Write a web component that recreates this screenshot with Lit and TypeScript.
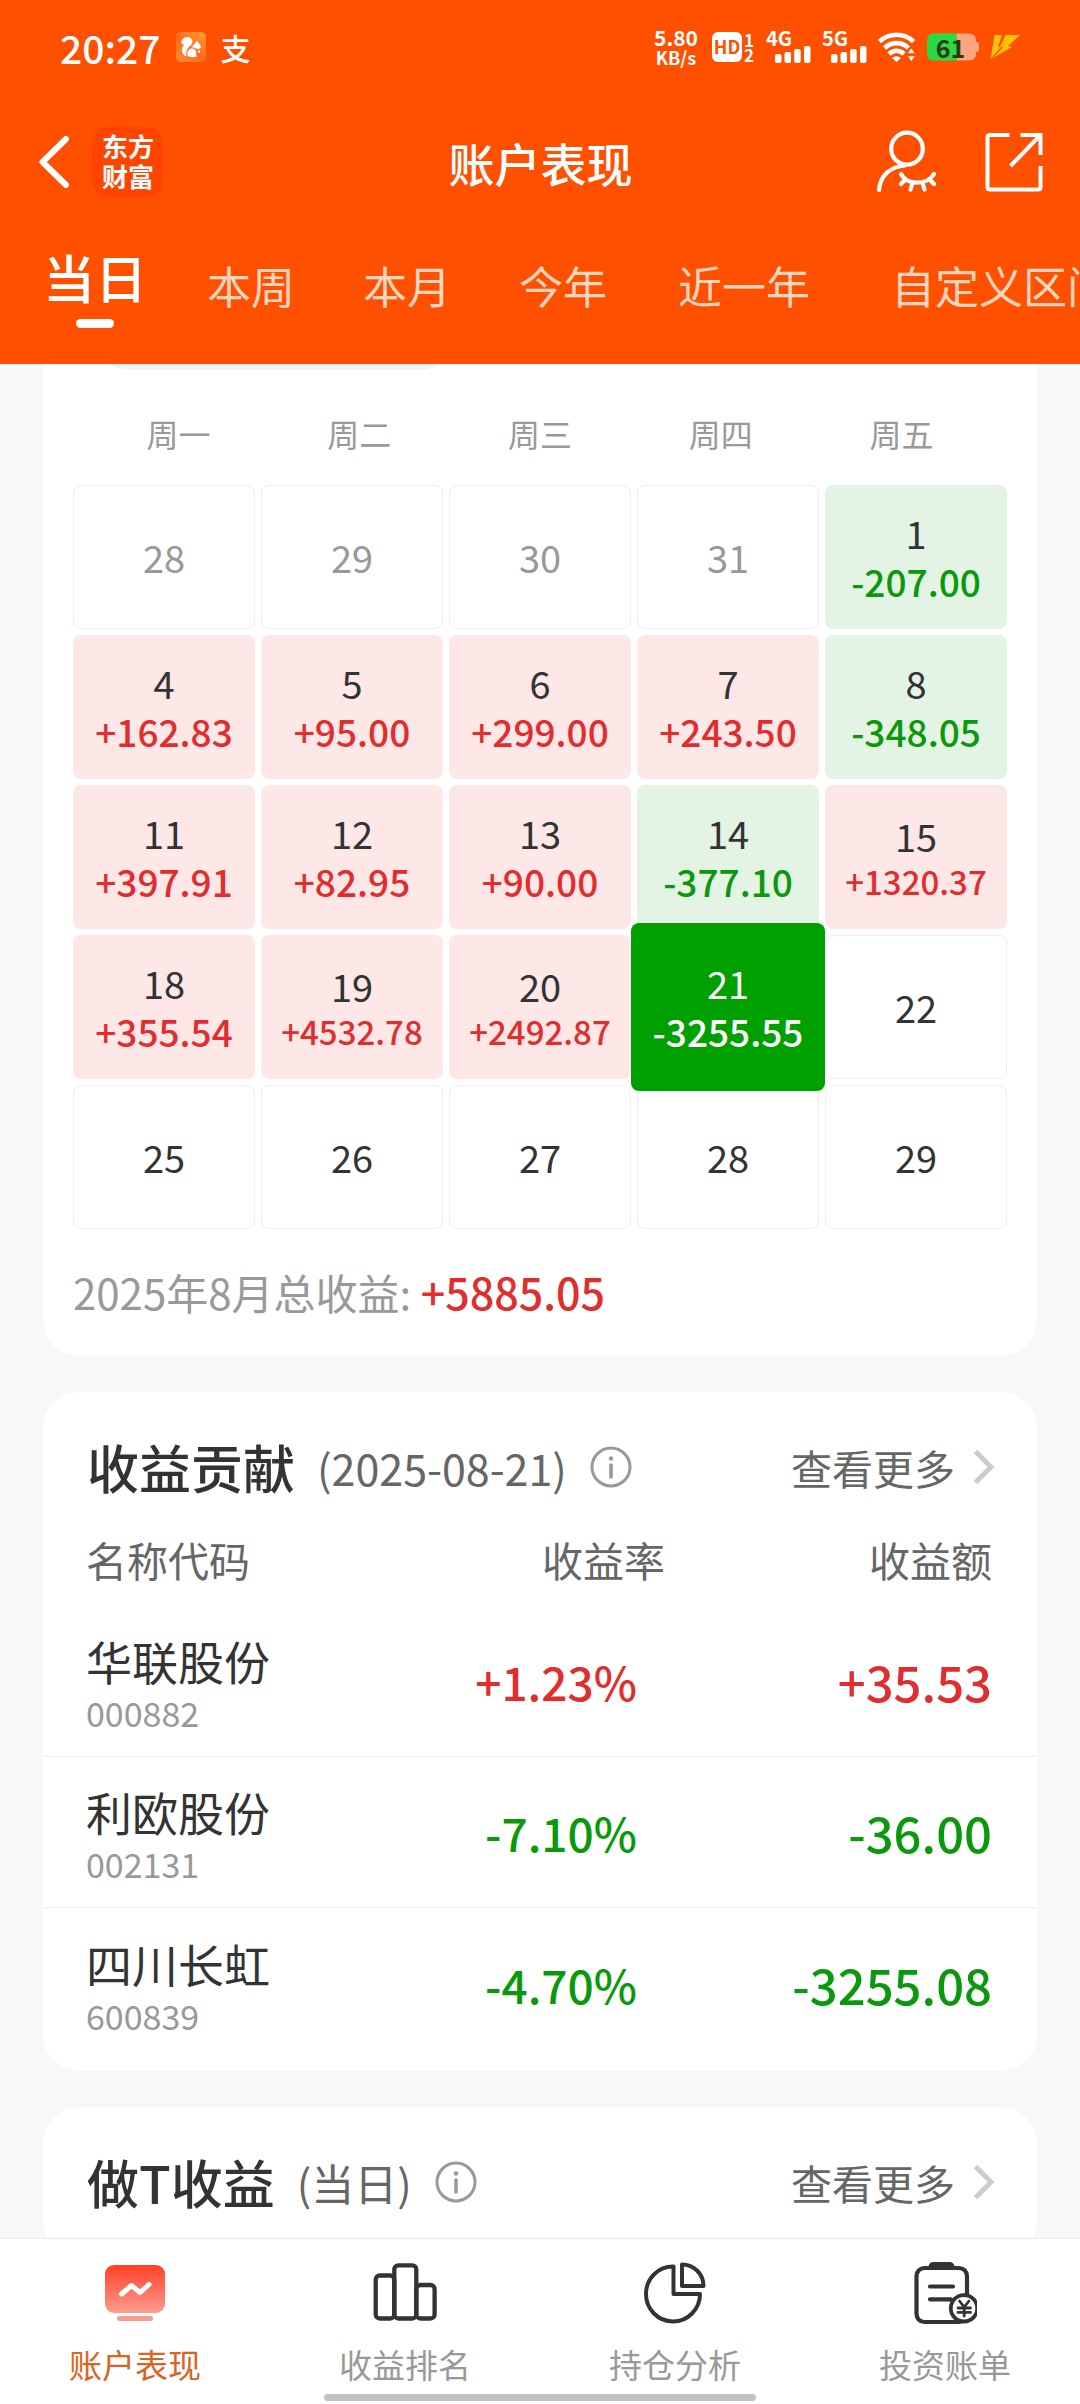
import { LitElement, html, svg, css, nothing } from "lit";
import { customElement, state } from "lit/decorators.js";
import { classMap } from "lit/directives/class-map.js";

interface Day {
  day: number;
  value?: string;
  outside?: boolean;
}

interface Holding {
  name: string;
  code: string;
  rate: string;
  amount: string;
}

const TABS = ["当日", "本周", "本月", "今年", "近一年", "自定义区间"];
const WEEKDAYS = ["周一", "周二", "周三", "周四", "周五"];

const DAYS: Day[] = [
  { day: 28, outside: true },
  { day: 29, outside: true },
  { day: 30, outside: true },
  { day: 31, outside: true },
  { day: 1, value: "-207.00" },
  { day: 4, value: "+162.83" },
  { day: 5, value: "+95.00" },
  { day: 6, value: "+299.00" },
  { day: 7, value: "+243.50" },
  { day: 8, value: "-348.05" },
  { day: 11, value: "+397.91" },
  { day: 12, value: "+82.95" },
  { day: 13, value: "+90.00" },
  { day: 14, value: "-377.10" },
  { day: 15, value: "+1320.37" },
  { day: 18, value: "+355.54" },
  { day: 19, value: "+4532.78" },
  { day: 20, value: "+2492.87" },
  { day: 21, value: "-3255.55" },
  { day: 22 },
  { day: 25 },
  { day: 26 },
  { day: 27 },
  { day: 28 },
  { day: 29 },
];

const HOLDINGS: Holding[] = [
  { name: "华联股份", code: "000882", rate: "+1.23%", amount: "+35.53" },
  { name: "利欧股份", code: "002131", rate: "-7.10%", amount: "-36.00" },
  { name: "四川长虹", code: "600839", rate: "-4.70%", amount: "-3255.08" },
];

const tone = (value: string) => (value.startsWith("+") ? "up" : "down");

const infoIcon = html`<svg width="42" height="42" viewBox="0 0 42 42" fill="none" aria-hidden="true">
  <circle cx="21" cy="21" r="19" stroke="#999" stroke-width="3" />
  <circle cx="21" cy="12.5" r="2.2" fill="#999" />
  <path d="M21 19V31" stroke="#999" stroke-width="3.6" stroke-linecap="round" />
</svg>`;

const moreIcon = html`<svg width="22" height="36" viewBox="0 0 22 36" fill="none" aria-hidden="true">
  <path d="M2.5 2.5L18 18L2.5 33.5" stroke="#ccc" stroke-width="5" />
</svg>`;

const navIcons = {
  performance: svg`
    <defs>
      <linearGradient id="screen" x1="0" y1="0" x2="0" y2="1">
        <stop offset="0" stop-color="#ff4026" />
        <stop offset="1" stop-color="#ff9c90" />
      </linearGradient>
    </defs>
    <rect x="2" y="4" width="60" height="48" rx="9" fill="url(#screen)" />
    <path d="M18.500 33L28.500 24.500L37 31.500L46 23.500" stroke="#fff" stroke-width="5" stroke-linecap="round" stroke-linejoin="round" />
    <rect x="14" y="55" width="36" height="5" rx="2.500" fill="#f69c90" />`,
  ranking: svg`
    <g stroke="#333" stroke-width="4.300">
      <rect x="2.700" y="14.500" width="18.600" height="43" rx="4" />
      <rect x="21.300" y="4.300" width="22" height="53.200" rx="4" />
      <rect x="43.300" y="24" width="18.300" height="33.500" rx="4" />
    </g>`,
  analysis: svg`
    <g stroke="#333" stroke-width="4" stroke-linejoin="round">
      <path d="M30.500 5.500A27 27.500 0 1 0 57 33H30.500Z" />
      <path d="M39 3.500V25H60.500C60.500 13 51 3.500 39 3.500Z" />
    </g>`,
  bill: svg`
    <rect x="3.500" y="7" width="50.500" height="54" rx="8" stroke="#333" stroke-width="4.200" />
    <path d="M15.500 5C16.500 2 18 1 20 1H37C39 1 40.500 2 41.500 5V8H15.500Z" fill="#333" />
    <path d="M17 25.500H40M17 38.300H38" stroke="#333" stroke-width="4.200" stroke-linecap="round" />
    <circle cx="51" cy="47.300" r="13.200" fill="#fff" stroke="#333" stroke-width="3.800" />
    <path d="M46.500 40L51.200 46L56 40M45 47H57.500M45 51.400H57.500M51.200 46V55" stroke="#333" stroke-width="2.800" stroke-linecap="round" />`,
};

const NAV = [
  { label: "账户表现", icon: navIcons.performance, active: true },
  { label: "收益排名", icon: navIcons.ranking, active: false },
  { label: "持仓分析", icon: navIcons.analysis, active: false },
  { label: "投资账单", icon: navIcons.bill, active: false },
];

@customElement("status-bar")
export class StatusBar extends LitElement {
  static styles = css`
    :host {
      display: flex;
      justify-content: space-between;
      align-items: center;
      height: 94px;
      padding: 0 60px;
      color: #fff;
    }
    .side {
      display: flex;
      align-items: center;
      gap: 15px;
    }
    .side.right {
      gap: 11px;
    }
    .time {
      font-size: 39px;
      line-height: 40px;
      font-weight: 500;
    }
    .pay {
      font-size: 30px;
      line-height: 30px;
      font-weight: 500;
    }
    .speed {
      display: flex;
      flex-direction: column;
      align-items: center;
      width: 50px;
      font-size: 21px;
      line-height: 20px;
      font-weight: 700;
    }
    .unit {
      font-size: 18px;
    }
    .hd {
      display: flex;
      gap: 2px;
      font-weight: 700;
    }
    .hd-box {
      width: 30px;
      height: 30px;
      border-radius: 6px;
      background: #fff;
      color: #ff5000;
      font-size: 18px;
      line-height: 28px;
      text-align: center;
    }
    .sims {
      display: flex;
      flex-direction: column;
      width: 11px;
      font-size: 17px;
      line-height: 15px;
    }
    .signal {
      display: grid;
      width: 45px;
      height: 32px;
    }
    .signal > * {
      grid-area: 1 / 1;
    }
    .gen {
      font-size: 20px;
      line-height: 14px;
      font-weight: 700;
    }
    .bars {
      place-self: end;
    }
    .battery {
      display: grid;
      place-items: center;
      width: 53px;
      height: 28px;
    }
    .battery > * {
      grid-area: 1 / 1;
    }
    .level {
      padding-right: 4px;
      font-size: 25px;
      line-height: 26px;
      font-weight: 700;
      color: #2b3a14;
    }
    svg {
      display: block;
    }
  `;

  private signal(gen: string) {
    return html`<span class="signal">
      <span class="gen">${gen}</span>
      <svg class="bars" width="36" height="18" viewBox="0 0 36 18" fill="#fff" aria-hidden="true">
        <rect y="9" width="6.500" height="9" rx="2" />
        <rect x="9.500" y="7" width="6.500" height="11" rx="2" />
        <rect x="19.200" y="4" width="6.500" height="14" rx="2" />
        <rect x="29" y="1" width="6.500" height="17" rx="2" />
      </svg>
    </span>`;
  }

  render() {
    return html`
      <div class="side">
        <span class="time">20:27</span>
        <svg width="30" height="30" viewBox="0 0 30 30" aria-hidden="true">
          <defs>
            <linearGradient id="uc" x1="1" y1="0" x2="0.200" y2="1">
              <stop offset="0" stop-color="#ffa033" />
              <stop offset="0.600" stop-color="#ff6a1a" />
              <stop offset="1" stop-color="#ff8a33" />
            </linearGradient>
          </defs>
          <rect width="30" height="30" rx="5" fill="url(#uc)" />
          <path d="M9 24C5 21 5 16 8 13C5.500 12 4.500 10 6 8C7.500 5 12 4 15 6.500C17.500 9 16.500 12 14 14C11 16.500 9.500 20 10.500 24Z" fill="#fff" />
          <path d="M15 15.500C17 13.500 18.500 11.500 20 10L21 8.500L22 10.500C24 12 25.500 14 24.500 16C23 17.500 21 17 19.500 16.500C18 15.500 16.500 15 15 15.500Z" fill="#fff" />
          <path d="M11.500 22C11 18.500 13.500 16 16.500 16.500C19.500 17 21 19 20 22L21 24.500C18 25.500 14 25.500 11.500 24Z" fill="#fff" />
          <circle cx="23" cy="19.500" r="1.200" fill="#fff" />
        </svg>
        <span class="pay">支</span>
      </div>
      <div class="side right">
        <span class="speed"><span>5.80</span><span class="unit">KB/s</span></span>
        <span class="hd">
          <span class="hd-box">HD</span>
          <span class="sims"><span>1</span><span>2</span></span>
        </span>
        ${this.signal("4G")} ${this.signal("5G")}
        <svg width="37" height="30" viewBox="0 0 37 30" fill="none" aria-hidden="true">
          <g stroke="#fff" stroke-width="4.600">
            <path d="M1.500 9.500C11 0.500 26 0.500 35.500 9.500" />
            <path d="M6.500 16C13.500 9.500 23.500 9.500 30.500 16" />
            <path d="M11 22C15.500 17.800 21.500 17.800 26 22" />
          </g>
          <path d="M14 26Q18.500 22.500 23 26L18.500 30Z" fill="#fff" />
          <path d="M29.500 21.500L33.300 16L37 21.500ZM29.500 24L33.300 29.500L37 24Z" fill="#fff" stroke="#ff5000" stroke-width="0.600" />
        </svg>
        <span class="battery">
          <svg width="53" height="28" viewBox="0 0 53 28" aria-hidden="true">
            <path d="M8 0.500H31V27.500H8Q1 27.500 1 20.500V7.500Q1 0.500 8 0.500Z" fill="#2bd944" />
            <path d="M31 0.500H43Q50 0.500 50 7.500V9H51Q53 9 53 11V17Q53 19 51 19H50V20.500Q50 27.500 43 27.500H31Z" fill="#ffa680" />
          </svg>
          <span class="level">61</span>
        </span>
        <svg width="30" height="26" viewBox="0 0 30 26" fill="#ffc107" aria-hidden="true">
          <path d="M4.500 1H12L8 12.500L11 13L0.500 25L3 11Z" />
          <path d="M15.500 1H30L18 12L22 13L2 24.500L13 13.500L10 12.500Z" />
        </svg>
      </div>
    `;
  }
}

@customElement("app-root")
export class AppRoot extends LitElement {
  static styles = css`
    :host {
      display: flex;
      flex-direction: column;
      height: 100vh;
      background: #f7f8fa;
      color: #333;
      font-family: "Noto Sans CJK SC", "Noto Sans", sans-serif;
      --up: #e12d2d;
      --down: #0a990a;
    }
    * {
      box-sizing: border-box;
    }
    button {
      margin: 0;
      padding: 0;
      border: 0;
      background: none;
      color: inherit;
      font: inherit;
      cursor: pointer;
    }
    a {
      color: inherit;
      text-decoration: none;
    }
    svg {
      display: block;
    }
    .up {
      color: var(--up);
    }
    .down {
      color: var(--down);
    }

    .header {
      flex: none;
      height: 364px;
      overflow: hidden;
      background: #ff5000;
      color: #fff;
    }
    .title-bar {
      display: grid;
      grid-template-columns: 1fr auto 1fr;
      align-items: center;
      height: 136px;
      padding: 0 37px 0 38px;
    }
    .title-bar .group {
      display: flex;
      align-items: center;
      gap: 22px;
    }
    .title-bar .actions {
      justify-content: flex-end;
      gap: 47px;
    }
    .brand {
      padding: 4px 9px 6px 10px;
      border-radius: 16px;
      background: #ff4400;
      font-size: 26px;
      line-height: 30px;
      font-weight: 700;
    }
    .brand span {
      display: block;
    }
    .title {
      margin: 0;
      font-size: 46px;
      line-height: 60px;
      font-weight: 500;
    }
    .tabs {
      display: grid;
      grid-template-columns: repeat(4, 156px) 206px 308px;
      align-items: start;
      padding: 15px 0 0 17px;
    }
    .tab {
      font-size: 44px;
      line-height: 80px;
      color: #ffd5bf;
      white-space: nowrap;
    }
    .tab.active {
      font-size: 52px;
      line-height: 64px;
      font-weight: 500;
      color: #fff;
    }
    .tab.active::after {
      content: "";
      display: block;
      width: 38px;
      height: 9px;
      margin: 10px auto 0;
      border-radius: 5px;
      background: #fff;
    }

    .content {
      flex: 1;
      min-height: 0;
      overflow: hidden;
      display: flex;
      flex-direction: column;
      gap: 36px;
      padding: 0 43px;
    }
    .card {
      flex: none;
      border-radius: 36px;
      background: #fff;
    }
    .calendar {
      margin-top: -70px;
      padding: 0 30px 31px;
    }
    .switch {
      width: 366px;
      height: 76px;
      margin-left: 19px;
      border-radius: 38px;
      background: #f2f2f6;
    }
    .weekdays {
      display: grid;
      grid-template-columns: repeat(5, 1fr);
      padding: 38px 15px 27px;
      font-size: 32px;
      line-height: 50px;
      color: #999;
      text-align: center;
    }
    .days {
      display: grid;
      grid-template-columns: repeat(5, 1fr);
      grid-auto-rows: 144px;
      gap: 6px;
    }
    .day {
      display: flex;
      flex-direction: column;
      align-items: center;
      justify-content: center;
      border: 1px solid #eee;
      border-radius: 8px;
      font-size: 38px;
      line-height: 48px;
    }
    .day.outside {
      color: #999;
    }
    .day.gain {
      border-color: transparent;
      background: #fde8e7 border-box;
    }
    .day.loss {
      border-color: transparent;
      background: #e3f4e4 border-box;
    }
    .day .value {
      font-size: 37px;
      font-weight: 500;
    }
    .day .value.small {
      font-size: 33px;
      line-height: 42px;
    }
    .day.selected {
      z-index: 1;
      margin: -12px -6px;
      background: #00a000 border-box;
      color: #fff;
    }
    .day.selected .value {
      color: #fff;
    }
    .total {
      margin: 0;
      padding-top: 29px;
      font-size: 42px;
      line-height: 66px;
      color: #999;
    }
    .total strong {
      font-size: 43px;
      font-weight: 500;
    }

    .card-head {
      display: flex;
      align-items: center;
      height: 117px;
      padding: 33px 42px 0 44px;
    }
    .card-head h2 {
      margin: 0 22px 0 0;
      font-size: 52px;
      line-height: 84px;
      font-weight: 500;
    }
    .card-head .date {
      font-size: 43px;
      line-height: 84px;
      color: #666;
    }
    .info {
      margin-left: 23px;
    }
    .more {
      display: flex;
      align-items: center;
      gap: 18px;
      margin-left: auto;
      font-size: 41px;
      line-height: 84px;
      color: #666;
    }
    .holdings-card {
      padding-bottom: 12px;
    }
    table {
      width: 100%;
      border-collapse: separate;
      border-spacing: 0;
      table-layout: fixed;
    }
    th,
    td {
      padding: 0;
      text-align: right;
      font-weight: 400;
    }
    th {
      height: 97px;
      padding-top: 2px;
      font-size: 41px;
      line-height: 60px;
      color: #666;
    }
    td {
      height: 151px;
      border-bottom: 1px solid #ededed;
      font-size: 49px;
      line-height: 64px;
    }
    tr:last-child td {
      border-bottom: 0;
    }
    .col-name {
      width: 34%;
      padding-left: 43px;
      text-align: left;
    }
    td.col-name {
      font-size: 46px;
    }
    .col-name .code {
      display: block;
      font-size: 34px;
      line-height: 42px;
      color: #999;
    }
    td.col-rate {
      padding-right: 72px;
      font-size: 46px;
    }
    th.col-rate {
      padding-right: 44px;
    }
    .col-amount {
      padding-right: 45px;
    }
    td.col-rate,
    td.col-amount {
      font-weight: 500;
    }
    .intraday {
      height: 152px;
    }

    .bottom {
      flex: none;
      border-top: 1px solid #ebebeb;
      background: #fff;
    }
    .nav {
      display: grid;
      grid-template-columns: repeat(4, 1fr);
      height: 155px;
      padding-top: 22px;
    }
    .nav a {
      display: flex;
      flex-direction: column;
      align-items: center;
      gap: 14px;
      font-size: 33px;
      line-height: 50px;
      color: #999;
    }
    .nav a.active {
      color: #d9641e;
    }
    .home {
      width: 40%;
      height: 7px;
      margin: 0 auto 3px;
      border-radius: 4px;
      background: #c2c2c2;
    }
  `;

  @state() private tab = TABS[0];
  @state() private selected = 21;

  private renderDay(d: Day) {
    const selected = !d.outside && d.day === this.selected;
    const small = !selected && (d.value?.length ?? 0) > 7;
    const classes = {
      day: true,
      outside: !!d.outside,
      gain: !!d.value?.startsWith("+"),
      loss: !!d.value?.startsWith("-"),
      selected,
    };
    return html`<button
      class=${classMap(classes)}
      @click=${() => {
        if (d.value) this.selected = d.day;
      }}
    >
      <span>${d.day}</span>
      ${d.value ? html`<span class="value ${tone(d.value)} ${small ? "small" : ""}">${d.value}</span>` : nothing}
    </button>`;
  }

  private renderHead(title: string, date: string) {
    return html`<div class="card-head">
      <h2>${title}</h2>
      <span class="date">(${date})</span>
      <button class="info" aria-label="说明">${infoIcon}</button>
      <a class="more" href="#">查看更多${moreIcon}</a>
    </div>`;
  }

  render() {
    return html`
      <header class="header">
        <status-bar></status-bar>
        <div class="title-bar">
          <div class="group">
            <button aria-label="返回">
              <svg width="32" height="54" viewBox="0 0 32 54" fill="none">
                <path d="M28 4L4.500 27L28 50" stroke="#fff" stroke-width="6" stroke-linecap="round" stroke-linejoin="round" />
              </svg>
            </button>
            <a class="brand" href="#"><span>东方</span><span>财富</span></a>
          </div>
          <h1 class="title">账户表现</h1>
          <div class="group actions">
            <button aria-label="隐藏账户">
              <svg width="62" height="64" viewBox="0 0 62 64" fill="none" stroke="#fff" stroke-width="4.200" stroke-linecap="round">
                <ellipse cx="31" cy="18.700" rx="15.800" ry="16" />
                <path d="M29 35.500C14 36.500 4 46 3 60" />
                <path d="M25 44C31 55.500 51 55.500 58 44" />
                <path d="M29.500 49.500L25 54M36.500 53L34.500 59.500M46.500 53L48.500 59.500M53.500 49.500L58 54" />
              </svg>
            </button>
            <button aria-label="分享">
              <svg width="58" height="60" viewBox="0 0 58 60" fill="none" stroke="#fff" stroke-width="4">
                <path d="M24.500 3H5Q2.500 3 2.500 5.500V55Q2.500 57.500 5 57.500H53Q55.500 57.500 55.500 55V34" />
                <path d="M35.500 3H55.500V23" />
                <path d="M55 3.500L25.500 34" />
              </svg>
            </button>
          </div>
        </div>
        <nav class="tabs">
          ${TABS.map(
            (t) => html`<button class=${classMap({ tab: true, active: t === this.tab })} @click=${() => (this.tab = t)}>${t}</button>`
          )}
        </nav>
      </header>

      <main class="content">
        <section class="card calendar">
          <div class="switch"></div>
          <div class="weekdays">${WEEKDAYS.map((w) => html`<span>${w}</span>`)}</div>
          <div class="days">${DAYS.map((d) => this.renderDay(d))}</div>
          <p class="total">2025年8月总收益: <strong class="up">+5885.05</strong></p>
        </section>

        <section class="card holdings-card">
          ${this.renderHead("收益贡献", "2025-08-21")}
          <table>
            <thead>
              <tr>
                <th class="col-name">名称代码</th>
                <th class="col-rate">收益率</th>
                <th class="col-amount">收益额</th>
              </tr>
            </thead>
            <tbody>
              ${HOLDINGS.map(
                (h) => html`<tr>
                  <td class="col-name">${h.name}<span class="code">${h.code}</span></td>
                  <td class="col-rate ${tone(h.rate)}">${h.rate}</td>
                  <td class="col-amount ${tone(h.amount)}">${h.amount}</td>
                </tr>`
              )}
            </tbody>
          </table>
        </section>

        <section class="card intraday">${this.renderHead("做T收益", "当日")}</section>
      </main>

      <footer class="bottom">
        <nav class="nav">
          ${NAV.map(
            (n) => html`<a href="#" class=${classMap({ active: n.active })}>
              <svg width="64" height="64" viewBox="0 0 64 64" fill="none" aria-hidden="true">${n.icon}</svg>
              <span>${n.label}</span>
            </a>`
          )}
        </nav>
        <div class="home"></div>
      </footer>
    `;
  }
}
